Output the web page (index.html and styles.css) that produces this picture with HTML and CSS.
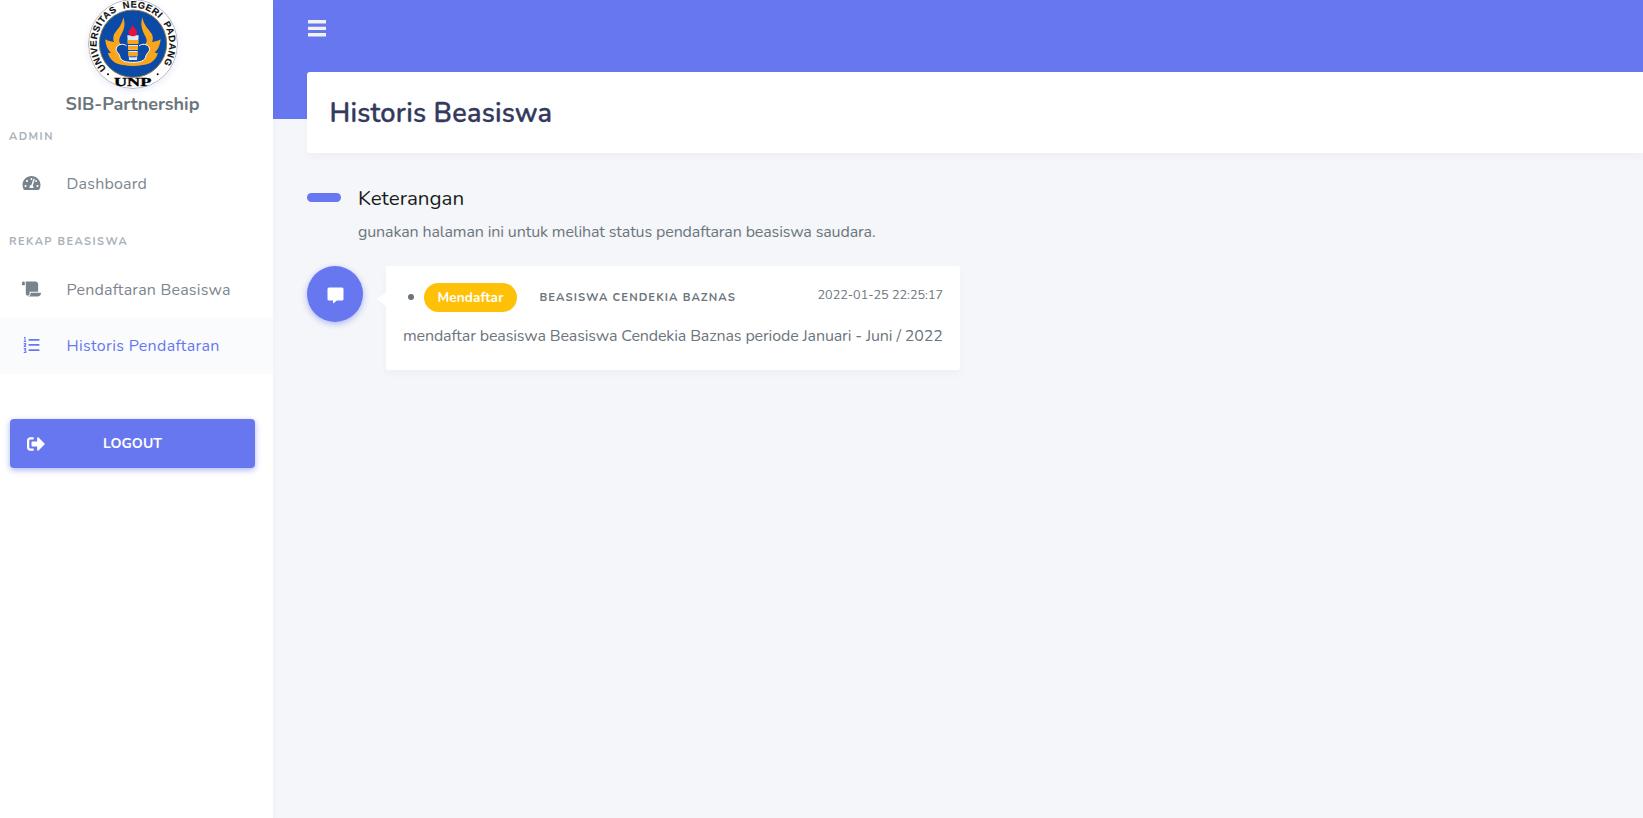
FILE: index.html
```
<!DOCTYPE html>
<html lang="id">
<head>
<meta charset="utf-8">
<title>Historis Beasiswa</title>
<link rel="stylesheet" href="styles.css">
</head>
<body>
<div class="layout">
  <aside class="sidebar">
    <div class="brand">
      <svg class="logo" viewBox="54 -3 270 270">
        <defs><path id="ring" d="M109 206 A109 109 0 1 1 269 206"/></defs>
        <circle cx="189" cy="132" r="133.5" fill="#fff" stroke="#8c8f94" stroke-width="2"/>
        <circle cx="189" cy="131" r="101" fill="#0b4aa6" stroke="#8a7a48" stroke-width="3"/>
        <text class="ring-text"><textPath href="#ring">UNIVERSITAS&#160; NEGERI&#160; PADANG</textPath></text>
        <circle cx="114" cy="223" r="3"/><circle cx="263" cy="223" r="3"/>
        <text class="unp" x="132" y="258" textLength="112" lengthAdjust="spacingAndGlyphs">UNP</text>
        <path fill="#f9a61a" d="M160 52 C156 76 142 88 132 103 C129 112 129 119 132 126 C122 125 113 123 106 118 C107 138 114 151 123 157 C120 160 116 160 113 158 C120 180 135 192 159 195 C180 199 199 199 219 195 C243 192 258 180 264 158 C260 160 257 160 254 157 C263 151 270 138 272 118 C265 123 256 125 246 126 C250 119 249 112 246 103 C236 88 221 76 217 52 C209 78 219 96 227 111 C232 121 231 128 224 134 L153 134 C147 128 146 121 150 111 C159 96 169 78 160 52Z"/>
        <path fill="#0b4aa6" d="M158 100H219V140H158Z"/>
        <path fill="#0b4aa6" stroke="#fff" stroke-width="3" d="M170 138 C162 130 144 131 139 144 C136 155 146 158 149 167 C151 184 168 187 188 187 C208 187 226 184 228 167 C231 158 241 155 238 144 C233 131 215 130 207 138"/>
        <path fill="#dfe8f5" d="M172 106H206L201 180H177Z"/>
        <path fill="#f9a61a" d="M173 120H205V132H173ZM174 138H204V149H174ZM175 156H203V168H175Z"/>
        <path fill="#0b4aa6" d="M173 132H205V135H173ZM174 150H204V153H174ZM178 169H200V172H178Z"/>
        <path fill="#e6123d" d="M188 73 C189 84 201 88 201 97 C201 107 195 109 188 109 C181 109 176 105 176 97 C176 89 187 84 188 73Z"/>
      </svg>
      <div class="brand-name">SIB-Partnership</div>
    </div>
    <div class="menu-header">ADMIN</div>
    <a class="menu-item">
      <svg class="mi" viewBox="0 0 576 512"><path d="M288 32C128.940 32 0 160.940 0 320c0 52.800 14.250 102.260 39.060 144.800 5.610 9.620 16.300 15.200 27.440 15.200h443c11.140 0 21.830-5.580 27.440-15.200C561.750 422.260 576 372.800 576 320c0-159.060-128.940-288-288-288zm0 64c14.710 0 26.580 10.130 30.320 23.650-1.110 2.260-2.640 4.230-3.450 6.670l-9.220 27.670c-5.130 3.490-10.970 6.010-17.640 6.010-17.670 0-32-14.330-32-32S270.330 96 288 96zM96 384c-17.670 0-32-14.330-32-32s14.330-32 32-32 32 14.330 32 32-14.330 32-32 32zm48-160c-17.670 0-32-14.330-32-32s14.330-32 32-32 32 14.330 32 32-14.330 32-32 32zm246.770-72.410l-61.330 184C343.130 347.330 352 364.540 352 384c0 11.720-3.380 22.550-8.880 32H232.880c-5.500-9.450-8.880-20.280-8.880-32 0-33.940 26.500-61.430 59.900-63.590l61.340-184.010c4.170-12.560 17.730-19.450 30.360-15.170 12.570 4.190 19.350 17.790 15.170 30.360zm14.660 57.200l15.520-46.550c3.470-1.290 7.130-2.230 11.050-2.230 17.670 0 32 14.330 32 32s-14.330 32-32 32c-11.380-.01-20.890-6.280-26.570-15.220zM480 384c-17.670 0-32-14.330-32-32s14.330-32 32-32 32 14.330 32 32-14.330 32-32 32z"/></svg>
      <span>Dashboard</span></a>
    <div class="menu-header second">REKAP BEASISWA</div>
    <a class="menu-item">
      <svg class="mi" viewBox="0 0 640 512"><path d="M48 0C21.530 0 0 21.530 0 48v64c0 8.840 7.160 16 16 16h80V48C96 21.530 74.470 0 48 0zm208 412.570V352h288V96c0-52.940-43.060-96-96-96H111.590C121.740 13.410 128 29.920 128 48v368c0 38.870 34.650 69.650 74.750 63.120C234.220 474 256 444.460 256 412.570zM288 384v32c0 52.930-43.060 96-96 96h336c61.860 0 112-50.140 112-112 0-8.840-7.160-16-16-16H288z"/></svg>
      <span>Pendaftaran Beasiswa</span></a>
    <a class="menu-item active">
      <svg class="mi" viewBox="0 0 512 512"><path d="M176 64h320a16 16 0 0 1 16 16v24a16 16 0 0 1-16 16H176a16 16 0 0 1-16-16V80a16 16 0 0 1 16-16zM176 226h320a16 16 0 0 1 16 16v24a16 16 0 0 1-16 16H176a16 16 0 0 1-16-16v-24a16 16 0 0 1 16-16zM176 388h320a16 16 0 0 1 16 16v24a16 16 0 0 1-16 16H176a16 16 0 0 1-16-16v-24a16 16 0 0 1 16-16zM16 32V0h48v128h24v32H8v-32h24V32zM8 192h80v56l-38 40h38v32H4v-34l48-56H8zM8 352h80v42l-24 22 28 32v64H8v-32h52v-24H28v-32l22-32H8z"/></svg>
      <span>Historis Pendaftaran</span></a>
    <a class="logout">
      <svg viewBox="0 0 512 512"><path fill="#fff" d="M497 273L329 441c-15 15-41 4.500-41-17v-96H152c-13.300 0-24-10.700-24-24v-96c0-13.300 10.700-24 24-24h136V88c0-21.400 25.900-32 41-17l168 168c9.300 9.400 9.300 24.600 0 34zM192 436v-40c0-6.600-5.400-12-12-12H96c-17.700 0-32-14.300-32-32V160c0-17.700 14.300-32 32-32h84c6.600 0 12-5.400 12-12V76c0-6.600-5.400-12-12-12H96c-53 0-96 43-96 96v192c0 53 43 96 96 96h84c6.600 0 12-5.400 12-12z"/></svg>
      <span>LOGOUT</span></a>
  </aside>
  <main class="main">
    <nav class="topbar"><svg class="bars" viewBox="0 0 18 17"><path fill="#f2f2f2" d="M0 0h18v3.500H0zM0 6.700h18v3.300H0zM0 13h18v3.500H0z"/></svg></nav>
    <section class="page-title"><h1>Historis Beasiswa</h1></section>
    <h2 class="section-title">Keterangan</h2>
    <p class="lead">gunakan halaman ini untuk melihat status pendaftaran beasiswa saudara.</p>
    <div class="activity">
      <div class="activity-icon"><svg viewBox="0 0 17 17"><path fill="#fff" d="M2 0.500H15Q16.500 0.500 16.500 2V12Q16.500 13.500 15 13.500H10L6.500 16.200Q6 16.500 6 15.800V13.500H2Q.5 13.500 .5 12V2Q.5 .5 2 .5Z"/></svg></div>
      <div class="activity-detail">
        <div class="row">
          <i class="bullet"></i><span class="badge">Mendaftar</span>
          <span class="job">BEASISWA CENDEKIA BAZNAS</span>
          <time class="time">2022-01-25 22:25:17</time>
        </div>
        <p class="desc">mendaftar beasiswa Beasiswa Cendekia Baznas periode Januari - Juni / 2022</p>
      </div>
    </div>
  </main>
</div>
</body>
</html>
```
FILE: styles.css
```
* { box-sizing: border-box; }
body { margin: 0; background: #f4f6f9; font-family: Nunito, Lato, sans-serif; font-size: 16px; font-weight: 400; color: #6c757d; overflow: hidden; }
h1, h2, p { margin: 0; font-weight: inherit; white-space: nowrap; }
.layout { display: flex; height: 818px; }
.sidebar { width: 273px; flex: none; background: #fff; box-shadow: 0 4px 8px rgba(0,0,0,.03); position: relative; }
.brand { display: flex; flex-direction: column; align-items: center; width: 265px; margin-top: -1px; height: 122px; }
.logo { width: 90px; height: 90px; flex: none; border-radius: 50%; box-shadow: 0 2px 6px rgba(103,119,239,.15); }
.ring-text { font: 700 28px "Liberation Sans", sans-serif; letter-spacing: 1.6px; fill: #111; stroke: #111; stroke-width: .5; }
.unp { font: 700 37px "Liberation Serif", serif; fill: #000; stroke: #000; }
.brand-name { font-weight: 700; font-size: 18px; line-height: 30px; letter-spacing: -.03px; }
.menu-header { height: 33px; line-height: 31px; padding-left: 9px; font-size: 11px; font-weight: 700; letter-spacing: 1.5px; color: #a9b1b9; }
.menu-header.second { margin-top: 15px; height: 34px; }
.menu-item { height: 57px; display: flex; align-items: center; padding-left: 22px; letter-spacing: .2px; color: #7c868f; }
.menu-item span { padding-top: 2px; }
.mi { width: 19px; height: 16px; margin-right: 25.5px; fill: #78838e; }
.menu-item.active { background: #fafbfd; color: #6777ef; letter-spacing: .33px; }
.menu-item.active span { padding-top: 1px; }
.menu-item.active .mi { fill: #6777ef; margin-top: -2px; }
.logout { display: flex; align-items: center; width: 245px; height: 49px; margin: 45px 0 0 10px; padding-left: 17px; border-radius: 4px; background: #6777ef; color: #fff; font-size: 14px; font-weight: 700; letter-spacing: .07px; box-shadow: 0 2px 6px #acb5f6; }
.logout svg { width: 18px; height: 18px; margin-right: 58px; }
.main { flex: 1; min-width: 0; padding-left: 34px; background: linear-gradient(#6777ef 119px, #f4f6f9 119px); }
.topbar { height: 72px; padding: 20px 0 0 1px; }
.bars { width: 18px; height: 17px; display: block; }
.page-title { height: 81px; background: #fff; border-radius: 3px 0 0 3px; box-shadow: 0 4px 8px rgba(0,0,0,.03); padding-left: 22.5px; }
h1 { font-size: 27px; font-weight: 600; line-height: 83px; letter-spacing: .23px; -webkit-text-stroke: .3px #34395e; color: #34395e; }
.section-title { display: flex; align-items: center; margin-top: 30px; height: 30px; font-size: 20.6px; color: #191d21; }
.section-title::before { content: ""; width: 34px; height: 9px; border-radius: 5px; background: #6777ef; margin: -2px 17px 0 0; }
.lead { padding-left: 51px; line-height: 38px; height: 53px; letter-spacing: -.125px; }
.activity { display: flex; }
.activity-icon { width: 56px; height: 56px; border-radius: 50%; background: #6777ef; box-shadow: 0 2px 6px #acb5f6; margin-right: 23px; display: flex; align-items: center; justify-content: center; }
.activity-icon svg { width: 17px; height: 17px; margin-top: 2px; }
.activity-detail { position: relative; width: 574px; height: 104px; background: #fff; border-radius: 3px; box-shadow: 0 4px 8px rgba(0,0,0,.03); padding: 17px 17px 0 17px; }
.activity-detail::before { content: ""; position: absolute; left: -9px; top: 26px; border: 7px solid transparent; border-right: 9px solid #fff; border-left: 0; }
.row { display: flex; align-items: center; height: 29px; }
.bullet { width: 6px; height: 6px; border-radius: 50%; background: #6c757d; margin: -1px 10px 0 5px; }
.badge { width: 93px; height: 29px; line-height: 30px; border-radius: 15px; background: #ffc107; color: #fff; font-size: 13.5px; font-weight: 700; letter-spacing: .15px; text-align: center; }
.job { margin-left: 22.5px; font-size: 11.3px; font-weight: 700; letter-spacing: 1.08px; margin-top: -1px; }
.time { margin-left: auto; font-size: 12.6px; margin-top: -7px; }
.desc { line-height: 48px; letter-spacing: -.125px; }
```
